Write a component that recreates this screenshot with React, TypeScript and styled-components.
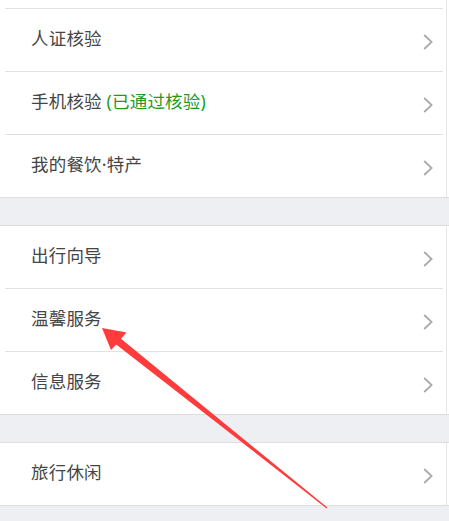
import styled, { createGlobalStyle } from 'styled-components'

const GlobalStyle = createGlobalStyle`
    html, body {
        margin: 0;
        padding: 0;
        background: #ffffff;
    }
    body {
        font-family: "Noto Sans", "Noto Sans CJK SC", "Liberation Sans", sans-serif;
    }
`

type Item = { label: string, note?: string }

const groups: Item[][] = [
    [
        { label: '人证核验' },
        { label: '手机核验', note: '(已通过核验)' },
        { label: '我的餐饮·特产' },
    ],
    [
        { label: '出行向导' },
        { label: '温馨服务' },
        { label: '信息服务' },
    ],
    [
        { label: '旅行休闲' },
    ],
]

function Chevron() {
    return (
        <ChevronIcon viewBox="0 0 10 16" width={10} height={16}>
            <polyline points="1.2,1 8.6,8 1.2,15" fill="none" stroke="#aaaaaa" strokeWidth="1.8" strokeLinejoin="miter" />
        </ChevronIcon>
    )
}

function Arrow() {
    return (
        <ArrowLayer viewBox="0 0 449 521" width={449} height={521}>
            <polygon
                points="102,328 126.5,332.5 121,338.8 327.4,507.6 326.6,508.4 116.2,344.4 111,350"
                fill="#ff3b3b" />
        </ArrowLayer>
    )
}

export default function App() {
    return (
        <Page>
            <GlobalStyle />
            <List>
                <TopGap />
                <Divider />
                {groups.map((rows, gi) => (
                    <div key={gi}>
                        {gi > 0 && <Band />}
                        {rows.map((row, ri) => (
                            <div key={row.label}>
                                {ri > 0 && <Divider />}
                                <Row>
                                    <Label>
                                        {row.label}
                                        {row.note && <Note> {row.note}</Note>}
                                    </Label>
                                    <Chevron />
                                </Row>
                            </div>
                        ))}
                    </div>
                ))}
                <Footer />
            </List>
            <Arrow />
        </Page>
    )
}

const Page = styled.div`
    position: relative;
    width: 449px;
    height: 521px;
    overflow: hidden;
    background: #ffffff;
`

const List = styled.div`
    display: flex;
    flex-direction: column;
    width: 446px;
    border-right: 1px solid #e6e6e6;
    background: #ffffff;
`

const TopGap = styled.div`
    height: 8px;
`

const Divider = styled.div`
    height: 1px;
    margin: 0 3px 0 5px;
    background: #e2e2e2;
`

const Band = styled.div`
    height: 27px;
    margin-right: -3px;
    background: #eeeff3;
    border-top: 1px solid #dddddf;
    border-bottom: 1px solid #dddddf;
`

const Footer = styled(Band)`
    height: 40px;
    border-bottom: none;
`

const Row = styled.div`
    display: flex;
    align-items: center;
    justify-content: space-between;
    height: 62px;
    padding: 0 13px 0 31px;
    background: #ffffff;
`

const Label = styled.span`
    font-size: 17.5px;
    line-height: 24px;
    margin-bottom: 4px;
    color: #454545;
    letter-spacing: 0.2px;
    white-space: pre;
`

const Note = styled.span`
    color: #1f9a1f;
`

const ChevronIcon = styled.svg`
    display: block;
    flex: none;
    margin-top: 4px;
`

const ArrowLayer = styled.svg`
    position: absolute;
    left: 0;
    top: 0;
    pointer-events: none;
`
